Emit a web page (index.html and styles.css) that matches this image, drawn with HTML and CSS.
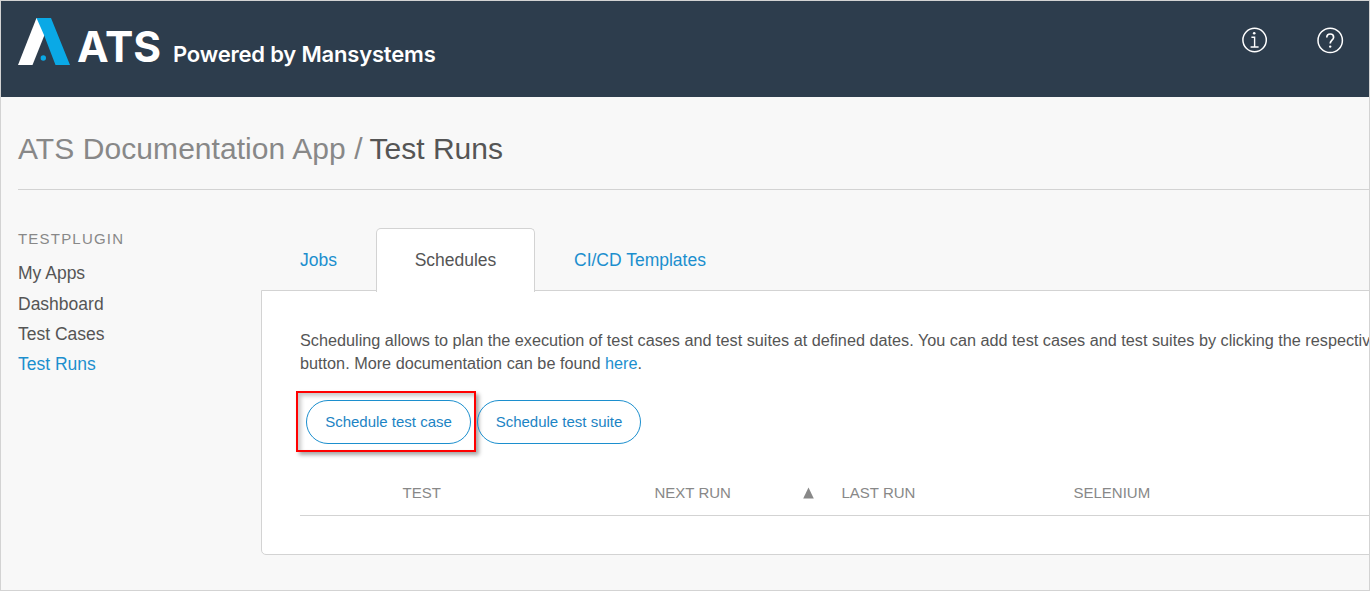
FILE: index.html
```html
<!DOCTYPE html>
<html lang="en">
<head>
<meta charset="utf-8">
<title>ATS - Test Runs</title>
<link rel="stylesheet" href="styles.css">
</head>
<body>
<div class="app">
  <header class="topbar">
    <div class="brand">
      <svg class="brand-mark" viewBox="0 0 52 48" width="52" height="48">
        <path fill="#fff" d="M18.5 0H24l2.5 17L14.5 47H0z"/>
        <path fill="#0aa9e6" d="M18.5 0H33l19 47H37.5L26 17z"/>
        <circle cx="25.3" cy="40" r="2.7" fill="#0aa9e6"/>
      </svg>
      <span class="brand-name">ATS</span>
      <span class="brand-sub">Powered by Mansystems</span>
    </div>
    <nav class="tools">
      <svg width="28" height="28" viewBox="0 0 28 28" fill="none" stroke="#fff">
        <circle cx="13.6" cy="14" r="11.7" stroke-width="1.5"/>
        <path stroke-width="1.4" d="M10.4 11.2h3.2v10M9.6 21h8"/>
        <circle cx="13.2" cy="7.3" r="1.3" fill="#fff" stroke="none"/>
      </svg>
      <svg width="28" height="28" viewBox="0 0 28 28" fill="none" stroke="#fff">
        <circle cx="13.2" cy="14.4" r="12.2" stroke-width="1.5"/>
        <path stroke-width="1.7" d="M9.8 11.6c0-2.3 1.3-3.6 3.4-3.6s3.4 1.3 3.4 3.2c0 3-3.4 3-3.4 6.4"/>
        <circle cx="13.2" cy="20.6" r="1.2" fill="#fff" stroke="none"/>
      </svg>
    </nav>
  </header>
  <h1 class="title"><span class="title-app">ATS Documentation App /</span> <span class="title-page">Test Runs</span></h1>
  <div class="columns">
    <aside class="sidebar">
      <h2 class="sidebar-head">TESTPLUGIN</h2>
      <a class="side-link">My Apps</a>
      <a class="side-link">Dashboard</a>
      <a class="side-link">Test Cases</a>
      <a class="side-link active">Test Runs</a>
    </aside>
    <main class="main">
      <div class="tabs">
        <a class="tab tab-jobs">Jobs</a>
        <a class="tab selected">Schedules</a>
        <a class="tab tab-ci">CI/CD Templates</a>
      </div>
      <section class="panel">
        <p class="intro">Scheduling allows to plan the execution of test cases and test suites at defined dates. You can add test cases and test suites by clicking the respectiv<br>button. More documentation can be found <a class="link">here</a>.</p>
        <div class="actions">
          <div class="highlight"><button class="pill">Schedule test case</button></div>
          <button class="pill pill-suite">Schedule test suite</button>
        </div>
        <div class="grid-head">
          <span></span><span>TEST</span><span>NEXT RUN</span>
          <svg class="sort" width="12" height="12" viewBox="0 0 12 12"><path d="M5.5 0.5L10.8 11.5H0.2z" fill="#888"/></svg>
          <span>LAST RUN</span><span>SELENIUM</span>
        </div>
      </section>
    </main>
  </div>
</div>
</body>
</html>
```
FILE: styles.css
```css
* { box-sizing: border-box; }
body {
  margin: 0;
  font-family: "Liberation Sans", Arial, sans-serif;
  color: #555;
}
.app {
  width: 1370px;
  height: 591px;
  border: 1px solid #d3d3d3;
  background: #f8f8f8;
  overflow: hidden;
}
.topbar {
  height: 96px;
  background: #2d3d4d;
  display: flex;
  justify-content: space-between;
  padding: 17px 24px 0 17px;
  color: #fff;
  font-family: Inter, sans-serif;
  white-space: nowrap;
}
.brand { display: flex; align-items: flex-start; }
.brand-name {
  margin: 6px 0 0 7px;
  width: 96px;
  font-size: 42.5px;
  line-height: 46px;
  font-weight: 700;
}
.brand-sub {
  margin-top: 21px;
  font-size: 22px;
  line-height: 30px;
  font-weight: 600;
  letter-spacing: -0.19px;
}
.tools { display: flex; gap: 48px; padding-top: 8px; }
.title {
  margin: 0 0 0 17px;
  height: 93px;
  padding-top: 34px;
  border-bottom: 1px solid #d3d3d3;
  font-size: 30px;
  line-height: 36px;
  font-weight: 400;
  white-space: nowrap;
}
.title-app { color: #888; letter-spacing: 0.05px; word-spacing: 0.2px; }
.title-page { margin-left: -1.5px; }
.columns { display: flex; }
.sidebar {
  width: 260px;
  flex: none;
  padding: 39px 0 0 17px;
  display: flex;
  flex-direction: column;
}
.sidebar-head {
  margin: 0 0 9px;
  font-size: 15px;
  line-height: 20px;
  font-weight: 400;
  letter-spacing: 1.2px;
  color: #888;
}
.side-link { font-size: 17.5px; line-height: 30.3px; }
.side-link:nth-of-type(2) { padding-top: 1px; margin-bottom: -1px; }
.active, .link { color: #1c8fce; }
.main { flex: none; width: 1200px; padding-top: 38px; }
.tabs { display: flex; height: 63px; font-size: 17.5px; line-height: 62px; white-space: nowrap; }
.tab { color: #1c8fce; }
.tab-jobs { width: 115px; padding: 1px 0 0 39px; }
.tab-ci { padding: 1px 0 0 39px; }
.tab.selected {
  width: 159px;
  height: 64px;
  text-align: center;
  color: #555;
  background: #fff;
  border: 1px solid #d3d3d3;
  border-bottom: 0;
  border-radius: 5px 5px 0 0;
  z-index: 1;
}
.panel {
  margin-top: -1px;
  height: 265px;
  padding: 38px 0 0 38px;
  background: #fff;
  border: 1px solid #d3d3d3;
  border-radius: 0 0 5px 5px;
}
.intro { margin: 0; font-size: 16.24px; line-height: 23px; white-space: nowrap; }
.actions { display: flex; margin: 16px 0 0 -4px; align-items: center; }
.highlight {
  width: 180px;
  height: 61px;
  padding: 7px 0 0 8px;
  border: 2px solid #f00;
  box-shadow: 3px 3px 4px rgba(0,0,0,.35), inset 3px 3px 4px rgba(0,0,0,.22);
  margin-right: 1px;
}
.pill {
  width: 165px;
  height: 44px;
  padding: 0 0 1px;
  border: 1px solid #1c8fce;
  border-radius: 22px;
  background: transparent;
  color: #1c84c4;
  font: 15px "Liberation Sans", Arial, sans-serif;
}
.pill-suite { width: 164px; padding: 0; }
.grid-head {
  display: grid;
  grid-template-columns: 102.5px 252px 148.5px 38.5px 232px 1fr;
  align-items: center;
  height: 64px;
  padding-top: 18px;
  border-bottom: 1px solid #d3d3d3;
  font-size: 15px;
  line-height: 20px;
  color: #888;
}
```
